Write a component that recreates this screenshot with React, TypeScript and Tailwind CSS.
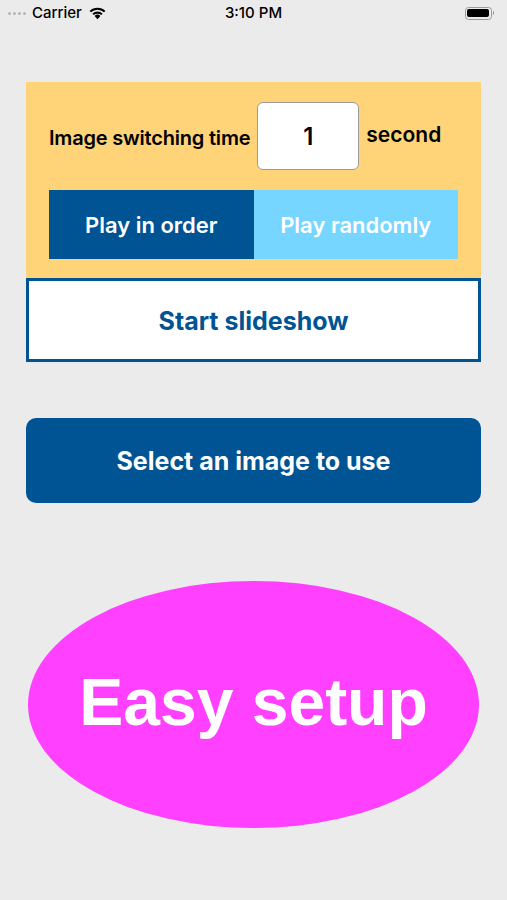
import React, { useState } from 'react';

const sf = { fontFamily: 'Inter, "Liberation Sans", sans-serif' };

const StatusBar = () => (
    <div className="relative flex items-center h-[26px] px-[8px] text-[15px] text-black" style={sf}>
        <div className="flex items-center gap-[2px]">
            {[0, 1, 2, 3].map((i) => (
                <span key={i} className="w-[3px] h-[3px] rounded-full bg-[#b5b5b5]" />
            ))}
        </div>
        <span className="ml-[6px] font-medium">Carrier</span>
        <svg className="ml-[6px]" width="19" height="14" viewBox="0 0 17 12">
            <path d="M8.5 11.5 L5.9 8.6 A3.8 3.8 0 0 1 11.1 8.6 Z" fill="#000" />
            <path d="M3.9 6.6 A6.6 6.6 0 0 1 13.1 6.6 L11.8 7.9 A4.8 4.8 0 0 0 5.2 7.9 Z" fill="#000" />
            <path d="M1.4 4.1 A10.2 10.2 0 0 1 15.6 4.1 L14.3 5.4 A8.4 8.4 0 0 0 2.7 5.4 Z" fill="#000" />
        </svg>
        <span className="absolute left-1/2 -translate-x-1/2 font-medium">3:10 PM</span>
        <div className="ml-auto flex items-center mr-[5px]">
            <div className="w-[27px] h-[13px] rounded-[3.5px] border border-[#9a9a9a] p-[1.5px]">
                <div className="w-full h-full rounded-[2px] bg-black" />
            </div>
            <div className="w-[1.5px] h-[4px] bg-[#9a9a9a] rounded-r-sm ml-[1px]" />
        </div>
    </div>
);

export default function App() {
    const [mode, setMode] = useState<'order' | 'random'>('order');
    const [seconds, setSeconds] = useState('1');

    return (
        <div className="w-[507px] h-[900px] bg-[#ebebeb] overflow-hidden" style={sf}>
            <StatusBar />

            <div className="px-[26px] pt-[56px]">
                {/* Settings panel */}
                <div className="bg-[#ffd479] pt-[20px] pb-[19px] px-[23px]">
                    <div className="flex items-center h-[68px]">
                        <span className="text-[20px] font-semibold text-black mt-[4px] tracking-[-0.2px] whitespace-nowrap">Image switching time</span>
                        <input
                            value={seconds}
                            onChange={(e) => setSeconds(e.target.value)}
                            className="ml-[7px] shrink-0 w-[102px] h-[68px] bg-white border border-[#9b9b9b] rounded-[6px] text-center text-[24px] font-semibold text-black outline-none"
                        />
                        <span className="ml-[7px] text-[21px] font-semibold text-black -mt-[2px] whitespace-nowrap">second</span>
                    </div>
                    <div className="flex mt-[20px] h-[69px]">
                        <button
                            onClick={() => setMode('order')}
                            className={`flex-1 pt-[2px] text-[22px] font-semibold text-white ${mode === 'order' ? 'bg-[#005493]' : 'bg-[#76d6ff]'}`}
                        >
                            Play in order
                        </button>
                        <button
                            onClick={() => setMode('random')}
                            className={`flex-1 pt-[2px] text-[22px] font-semibold text-white ${mode === 'random' ? 'bg-[#005493]' : 'bg-[#76d6ff]'}`}
                        >
                            Play randomly
                        </button>
                    </div>
                </div>

                <button className="w-full h-[84px] pt-[3px] bg-white border-[3px] border-[#005493] text-[25px] font-bold text-[#005493]">
                    Start slideshow
                </button>

                <button className="mt-[56px] w-full h-[85px] pt-[3px] rounded-[10px] bg-[#005493] text-[25px] font-bold text-white">
                    Select an image to use
                </button>
            </div>

            <div className="mt-[78px] flex justify-center">
                <div className="w-[451px] h-[247px] rounded-[50%] bg-[#ff40ff] flex items-center justify-center">
                    <span
                        className="text-[66px] font-bold text-white mt-[-4px]"
                        style={{ fontFamily: '"Liberation Sans", Arial, sans-serif' }}
                    >
                        Easy setup
                    </span>
                </div>
            </div>
        </div>
    );
}
